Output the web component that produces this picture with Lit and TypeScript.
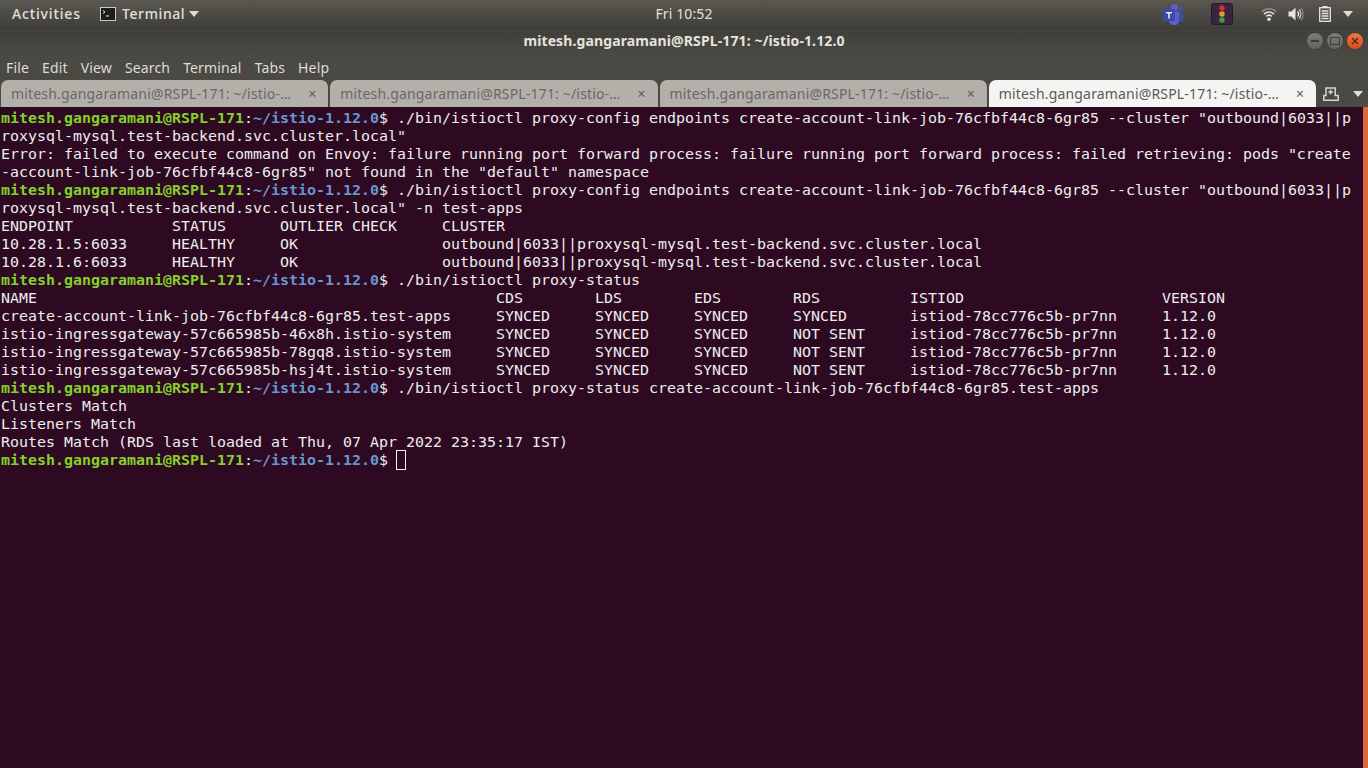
import { LitElement, html, css, svg } from "lit";
import { customElement } from "lit/decorators.js";

const P = "mitesh.gangaramani@RSPL-171";
const row = (vals: string[], cols: number[]) =>
  vals.map((v, i) => (i + 1 < vals.length ? v.padEnd(cols[i + 1] - cols[i]) : v)).join("");
const EC = [0, 19, 31, 49];
const SC = [0, 55, 66, 77, 88, 101, 129];
const ISTIOD = "istiod-78cc776c5b-pr7nn";

type Line = { prompt?: boolean; text: string; cursor?: boolean };
const lines: Line[] = [
  { prompt: true, text: ' ./bin/istioctl proxy-config endpoints create-account-link-job-76cfbf44c8-6gr85 --cluster "outbound|6033||p' },
  { text: 'roxysql-mysql.test-backend.svc.cluster.local"' },
  { text: 'Error: failed to execute command on Envoy: failure running port forward process: failure running port forward process: failed retrieving: pods "create' },
  { text: '-account-link-job-76cfbf44c8-6gr85" not found in the "default" namespace' },
  { prompt: true, text: ' ./bin/istioctl proxy-config endpoints create-account-link-job-76cfbf44c8-6gr85 --cluster "outbound|6033||p' },
  { text: 'roxysql-mysql.test-backend.svc.cluster.local" -n test-apps' },
  { text: row(["ENDPOINT", "STATUS", "OUTLIER CHECK", "CLUSTER"], EC) },
  { text: row(["10.28.1.5:6033", "HEALTHY", "OK", "outbound|6033||proxysql-mysql.test-backend.svc.cluster.local"], EC) },
  { text: row(["10.28.1.6:6033", "HEALTHY", "OK", "outbound|6033||proxysql-mysql.test-backend.svc.cluster.local"], EC) },
  { prompt: true, text: " ./bin/istioctl proxy-status" },
  { text: row(["NAME", "CDS", "LDS", "EDS", "RDS", "ISTIOD", "VERSION"], SC) },
  { text: row(["create-account-link-job-76cfbf44c8-6gr85.test-apps", "SYNCED", "SYNCED", "SYNCED", "SYNCED", ISTIOD, "1.12.0"], SC) },
  { text: row(["istio-ingressgateway-57c665985b-46x8h.istio-system", "SYNCED", "SYNCED", "SYNCED", "NOT SENT", ISTIOD, "1.12.0"], SC) },
  { text: row(["istio-ingressgateway-57c665985b-78gq8.istio-system", "SYNCED", "SYNCED", "SYNCED", "NOT SENT", ISTIOD, "1.12.0"], SC) },
  { text: row(["istio-ingressgateway-57c665985b-hsj4t.istio-system", "SYNCED", "SYNCED", "SYNCED", "NOT SENT", ISTIOD, "1.12.0"], SC) },
  { prompt: true, text: " ./bin/istioctl proxy-status create-account-link-job-76cfbf44c8-6gr85.test-apps" },
  { text: "Clusters Match" },
  { text: "Listeners Match" },
  { text: "Routes Match (RDS last loaded at Thu, 07 Apr 2022 23:35:17 IST)" },
  { prompt: true, text: " ", cursor: true },
];

const menus = ["File", "Edit", "View", "Search", "Terminal", "Tabs", "Help"];
const tabs = [false, false, false, true];

const teams = svg`<svg class="teams" viewBox="0 0 22 22" width="22" height="22">
  <circle cx="12.5" cy="4.5" r="3.4" fill="#5b5fc7"/>
  <circle cx="18.5" cy="6" r="2.5" fill="#4a4fa8"/>
  <path d="M15.5 9.5h6v6.5a3 3 0 0 1-6 0z" fill="#444a9e"/>
  <path d="M7 8.5h10v9a4.8 4.8 0 0 1-10 0z" fill="#5b5fc7"/>
  <rect x="1" y="6" width="12" height="12" rx="1.2" fill="#3f46b0"/>
  <path d="M4 9h6v1.4H7.8V15.500H6.200V10.400H4z" fill="#e8e8f4"/>
</svg>`;
const lights = svg`<svg viewBox="0 0 22 22" width="22" height="22">
  <rect x="0.500" y="0.500" width="21" height="21" rx="2.500" fill="#3a2540" stroke="#241a28"/>
  <circle cx="11" cy="5" r="2.700" fill="#d92c2c"/>
  <circle cx="11" cy="11" r="2.700" fill="#e0a030"/>
  <circle cx="11" cy="17" r="2.700" fill="#3aa43a"/>
</svg>`;
const wifi = svg`<svg viewBox="0 0 16 14" width="16" height="14" fill="none" stroke-linecap="butt">
  <path d="M0.800 4.600a10.500 10.500 0 0 1 14.400 0" stroke="#8f8e89" stroke-width="1.500"/>
  <path d="M3 7.100a7.200 7.200 0 0 1 10 0" stroke="#e6e6e3" stroke-width="1.500"/>
  <path d="M5.200 9.400a4.100 4.100 0 0 1 5.600 0" stroke="#e6e6e3" stroke-width="1.500"/>
  <circle cx="8" cy="12.200" r="1.700" fill="#eeeeea"/>
</svg>`;
const speaker = svg`<svg viewBox="0 0 16 16" width="16" height="16" fill="none">
  <path d="M0.500 5.500h3l4-4v13l-4-4h-3z" fill="#e6e6e3"/>
  <path d="M9.500 5.500a3.500 3.500 0 0 1 0 5" stroke="#e6e6e3" stroke-width="1.400"/>
  <path d="M11 3.500a6.500 6.500 0 0 1 0 9" stroke="#c9c8c4" stroke-width="1.300"/>
  <path d="M12.800 1.800a9 9 0 0 1 0 12.400" stroke="#85847f" stroke-width="1.300"/>
</svg>`;
const battery = svg`<svg viewBox="0 0 12 16" width="12" height="16" fill="none">
  <rect x="3.500" y="0" width="5" height="2" fill="#e6e6e3"/>
  <rect x="0.700" y="1.700" width="10.600" height="13.600" stroke="#e6e6e3" stroke-width="1.300"/>
  <path d="M2.500 5h7M2.500 7.500h7M2.500 10h7M2.500 12.500h7" stroke="#e6e6e3" stroke-width="1.400"/>
</svg>`;
const termIcon = svg`<svg viewBox="0 0 16 14" width="16" height="14">
  <rect x="0.500" y="0.500" width="15" height="13" fill="#1d1d1b" stroke="#c9c8c4"/>
  <path d="M3 3.500l2 1.500-2 1.500" fill="none" stroke="#f0f0ee" stroke-width="0.900"/>
  <path d="M6 9h3" stroke="#f0f0ee"/>
</svg>`;
const newTab = svg`<svg viewBox="0 0 16 14" width="16" height="14" fill="none" stroke="#d6d5d1" stroke-width="1.500">
  <path d="M0.800 13.200V8.500H3V1h9.200v7.500h3v4.700z"/>
  <path d="M7.600 2.800v4.400M5.400 5h4.400"/>
</svg>`;

@customElement("app-root")
export class AppRoot extends LitElement {
  static styles = css`
    :host {
      display: flex;
      flex-direction: column;
      width: 1368px;
      height: 768px;
      overflow: hidden;
      font-family: "Noto Sans", "Open Sans", sans-serif;
      background: #2d0922;
    }
    .topbar {
      height: 27px;
      flex: none;
      display: grid;
      grid-template-columns: 1fr auto 1fr;
      align-items: center;
      background: linear-gradient(#5a5850, #403f3a);
      color: #e2e1dc;
      font-size: 14px;
    }
    .left { display: flex; align-items: center; }
    .activities { margin-left: 12px; width: 88px; letter-spacing: 0.85px; font-weight: 500; }
    .term-label { margin-left: 6px; letter-spacing: 0.6px; font-weight: 500; }
    .tri { width: 0; height: 0; border: 5px solid transparent; border-top: 6px solid #dddcd7; border-bottom: 0; }
    .left .tri { margin-left: 4px; }
    .clock { letter-spacing: 0.1px; }
    .tray { display: flex; align-items: center; justify-content: flex-end; padding-right: 15px; }
    .tray svg, .tray .tri { display: block; }
    .t2 { margin-left: 27px; }
    .t3 { margin-left: 28px; }
    .t4 { margin-left: 11px; }
    .t5 { margin-left: 15px; }
    .t6 { margin-left: 12px; }
    .titlebar {
      height: 28px;
      flex: none;
      display: grid;
      grid-template-columns: 1fr auto 1fr;
      align-items: center;
      background: linear-gradient(#3e3d38, #4b4943);
      color: #e4e3de;
      font-size: 14px;
      font-weight: 700;
    }
    .title { grid-column: 2; letter-spacing: 0.12px; padding-bottom: 1px; }
    .wbtns { grid-column: 3; display: flex; justify-content: flex-end; gap: 4px; padding-right: 5px; }
    .wbtn {
      width: 16px; height: 16px; border-radius: 50%;
      background: linear-gradient(#7d7c76, #63625c);
      display: flex; align-items: center; justify-content: center;
      box-shadow: 0 0 0 0.5px #3a3934;
    }
    .wbtn.close { background: linear-gradient(#f0743f, #d9501e); }
    .minbar { width: 8px; height: 2px; background: #3f3e39; }
    .maxbox { width: 8px; height: 6px; border: 1px solid #3f3e39; }
    .menubar {
      height: 25px;
      flex: none;
      display: flex;
      align-items: center;
      gap: 13px;
      padding-left: 6px;
      background: #4b4943;
      color: #dedcd7;
      font-size: 14px;
      letter-spacing: 0.15px;
    }
    .tabbar {
      height: 27px;
      flex: none;
      display: flex;
      background: #4b4943;
    }
    .tabs { width: 1316px; box-sizing: border-box; padding-left: 1px; display: flex; gap: 2px; }
    .tab {
      flex: 1;
      display: flex;
      align-items: center;
      padding: 0 12px 0 10px;
      border-radius: 7px 7px 0 0;
      background: #b3b0aa;
      color: #6a6864;
      font-size: 14px;
      white-space: nowrap;
    }
    .tab.active { background: #f4f4f3; color: #5c5a56; }
    .tab-label { flex: 1; letter-spacing: 0.17px; }
    .x { color: #5e5c58; font-size: 14px; line-height: 1; }
    .tabtools { flex: 1; display: flex; align-items: center; justify-content: space-between; padding: 0 5px 0 7px; }
    .term {
      flex: 1;
      display: flex;
      background: #2d0922;
    }
    .screen {
      flex: 1;
      padding: 2px 0 0 1px;
      font-family: "DejaVu Sans Mono", monospace;
      font-size: 14.95px;
      letter-spacing: 0.006px;
      line-height: 18px;
      color: #eeeeec;
      white-space: pre;
      overflow: hidden;
    }
    .line { height: 18px; }
    .u { color: #85d02c; font-weight: 700; }
    .p { color: #6a96cf; font-weight: 700; }
    .cursor {
      display: inline-block;
      width: 10px;
      height: 20px;
      margin: -1px 0 0 -1px;
      box-sizing: border-box;
      border: 1px solid #f4f4f4;
      vertical-align: top;
    }
    .thumb { width: 5px; flex: none; background: #d9683a; }
  `;

  private renderLine(l: Line) {
    return html`<div class="line">${l.prompt
      ? html`<span class="u">${P}</span><span class="c">:</span><span class="p">~/istio-1.12.0</span><span>$</span>`
      : ""}<span>${l.text}</span>${l.cursor ? html`<span class="cursor"></span>` : ""}</div>`;
  }

  render() {
    return html`
      <div class="topbar">
        <div class="left">
          <span class="activities">Activities</span>
          ${termIcon}
          <span class="term-label">Terminal</span>
          <span class="tri"></span>
        </div>
        <div class="clock">Fri 10:52</div>
        <div class="tray">
          ${teams}
          <span class="t2">${lights}</span>
          <span class="t3">${wifi}</span>
          <span class="t4">${speaker}</span>
          <span class="t5">${battery}</span>
          <span class="tri t6"></span>
        </div>
      </div>
      <div class="titlebar">
        <div class="title">mitesh.gangaramani@RSPL-171: ~/istio-1.12.0</div>
        <div class="wbtns">
          <div class="wbtn"><div class="minbar"></div></div>
          <div class="wbtn"><div class="maxbox"></div></div>
          <div class="wbtn close"><svg viewBox="0 0 8 8" width="8" height="8"><path d="M1 1l6 6M7 1l-6 6" stroke="#4a2410" stroke-width="1.300"/></svg></div>
        </div>
      </div>
      <div class="menubar">${menus.map((m) => html`<span>${m}</span>`)}</div>
      <div class="tabbar">
        <div class="tabs">
          ${tabs.map(
            (a) => html`<div class="tab ${a ? "active" : ""}">
              <span class="tab-label">mitesh.gangaramani@RSPL-171: ~/istio-…</span>
              <span class="x">×</span>
            </div>`
          )}
        </div>
        <div class="tabtools">${newTab}<span class="tri"></span></div>
      </div>
      <div class="term">
        <div class="screen">${lines.map((l) => this.renderLine(l))}</div>
        <div class="thumb"></div>
      </div>
    `;
  }
}
